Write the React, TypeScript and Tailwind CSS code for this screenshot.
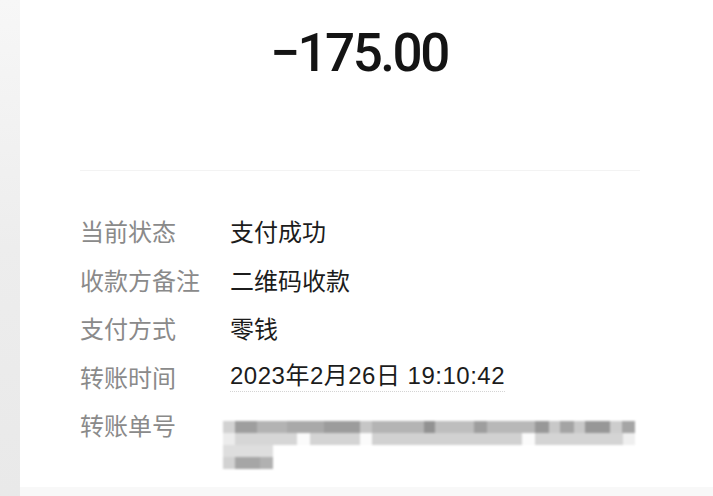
const rows = [
  { label: "当前状态", value: "支付成功" },
  { label: "收款方备注", value: "二维码收款" },
  { label: "支付方式", value: "零钱" },
  { label: "转账时间", value: "2023年2月26日 19:10:42" },
];

// pixelated order number: [width, colour]
const blurRows: [number, string][][] = [
  [
    [12, "#d2d2d2"], [22, "#9e9e9e"], [30, "#b3b3b3"], [37, "#a9a9a9"], [36, "#9c9c9c"],
    [12, "#c6c6c6"], [52, "#b4b4b4"], [11, "#929292"], [39, "#bebebe"], [13, "#9e9e9e"],
    [48, "#b8b8b8"], [14, "#989898"], [11, "#c8c8c8"], [14, "#a4a4a4"], [11, "#c8c8c8"],
    [25, "#979797"], [12, "#cdcdcd"], [13, "#a5a5a5"],
  ],
  [
    [12, "#ececec"], [62, "#d6d6d6"], [13, "#fbfbfb"], [50, "#d4d4d4"], [12, "#fbfbfb"],
    [150, "#d1d1d1"], [13, "#fbfbfb"], [88, "#d4d4d4"], [12, "#efefef"],
  ],
  [[50, "#dedede"]],
  [[12, "#d2d2d2"], [25, "#a6a6a6"], [13, "#b1b1b1"]],
];

export default function App() {
  return (
    <div
      className="flex h-[496px] w-[713px] overflow-hidden bg-white"
      style={{ fontFamily: '"Noto Sans CJK SC", "Noto Sans", sans-serif' }}
    >
      <div className="w-[20px] shrink-0 bg-gradient-to-b from-[#f7f7f7] via-[#ededed] to-[#e9e9e9]" />
      <div className="flex flex-1 flex-col">
        <div className="flex h-[170px] flex-col pr-[15px]">
          <div className="pt-[23px] text-center font-['Roboto',sans-serif] text-[53px] font-medium leading-[60px] tracking-[-2.5px] text-[#141414]">
            −175.00
          </div>
        </div>
        <div className="ml-[60px] mr-[73px] border-t border-[#f3f3f3]" />
        <div className="flex flex-col pl-[60px] pt-[36px]">
          {rows.map((r) => (
            <div key={r.label} className="flex h-[48.5px] items-center text-[24px]">
              <span className="w-[150px] shrink-0 text-[#8a8a8a]">{r.label}</span>
              <span
                className={
                  r.label === "转账时间"
                    ? "border-b border-dotted border-[#d4d4d4] font-['Liberation_Sans','Noto_Sans_CJK_SC',sans-serif] leading-[30px] tracking-[0.5px] text-[#1c1c1c]"
                    : "text-[#1c1c1c]"
                }
              >
                {r.value}
              </span>
            </div>
          ))}
          <div className="flex items-start text-[24px]">
            <span className="mt-[7px] w-[143px] shrink-0 leading-[34px] text-[#8a8a8a]">转账单号</span>
            <div className="mt-[20px] flex flex-col blur-[1.2px]">
              {blurRows.map((row, i) => (
                <div key={i} className="flex h-[12px]">
                  {row.map(([w, c], j) => (
                    <div key={j} className="h-full" style={{ width: w, backgroundColor: c }} />
                  ))}
                </div>
              ))}
            </div>
          </div>
        </div>
        <div className="mt-auto h-[9px] bg-[#f8f8f8]" />
      </div>
    </div>
  );
}
